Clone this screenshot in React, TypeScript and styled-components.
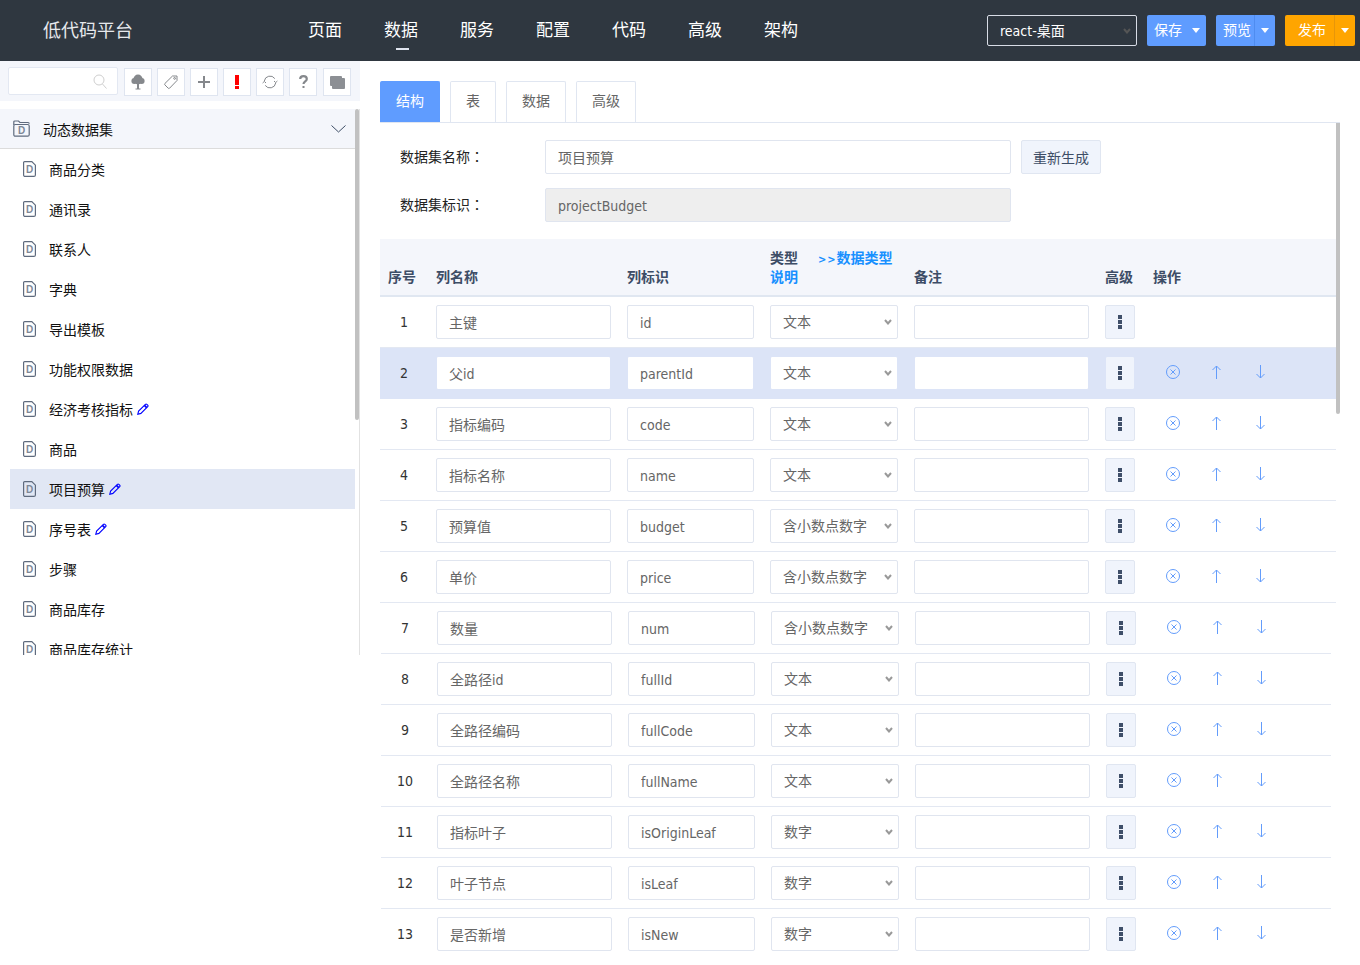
import React from "react";
import styled, { createGlobalStyle } from "styled-components";

const GlobalStyle = createGlobalStyle`
  html, body {
    margin: 0;
    padding: 0;
    overflow: hidden;
    background: #fff;
  }
  body, input, select, button {
    font-family: "DejaVu Sans Condensed", "Noto Sans CJK SC", sans-serif;
    font-size: 14px;
  }
  * {
    box-sizing: border-box;
  }
`;

const Page = styled.div`
  width: 1360px;
  height: 965px;
  overflow: hidden;
  display: flex;
  flex-direction: column;
`;

const Header = styled.header`
  height: 61px;
  flex: none;
  display: flex;
  align-items: center;
  background: #2f3740;
`;

const Brand = styled.div`
  width: 308px;
  padding: 0 0 3px 43px;
  font-size: 18px;
  color: #e6e8ec;
`;

const Nav = styled.nav`
  display: flex;
  gap: 42px;
  padding-bottom: 1px;
`;

const NavItem = styled.a<{ $active?: boolean }>`
  position: relative;
  width: 34px;
  white-space: nowrap;
  font-size: 17px;
  line-height: 24px;
  color: #fff;

  ${({ $active }) =>
    $active &&
    `
    &::after {
      content: "";
      position: absolute;
      left: 12px;
      bottom: -8px;
      width: 13px;
      height: 2px;
      background: #dfe3ee;
    }
  `}
`;

const HeaderActions = styled.div`
  margin-left: auto;
  margin-right: 5px;
  display: flex;
  gap: 10px;
`;

const SelectWrap = styled.div<{ $width?: number }>`
  position: relative;
  width: ${({ $width }) => ($width ? `${$width}px` : "100%")};
`;

const SelectChevron = styled.svg<{ $color: string }>`
  position: absolute;
  top: 50%;
  right: 6px;
  margin-top: -3px;
  pointer-events: none;
  stroke: ${({ $color }) => $color};
`;

const AppSelect = styled.select`
  display: block;
  appearance: none;
  width: 100%;
  height: 31px;
  padding: 0 12px;
  border: 1px solid #d8dce6;
  border-radius: 2px;
  background: #2f3740;
  color: #fff;
  outline: none;
`;

const SplitButton = styled.div<{ $color: string }>`
  height: 31px;
  display: flex;
  border-radius: 2px;
  background: ${({ $color }) => $color};
  color: #fff;
  line-height: 30px;
`;

const SplitLabel = styled.span<{ $pad: number; $width: number; $line: string }>`
  width: ${({ $width }) => $width}px;
  padding-left: ${({ $pad }) => $pad}px;
  border-right: 1px solid ${({ $line }) => $line};
  white-space: nowrap;
`;

const SplitCaret = styled.span`
  flex: 1;
  width: 20px;
  display: flex;
  align-items: center;
  justify-content: center;

  &::before {
    content: "";
    border-style: solid;
    border-width: 5px 4px 0;
    border-color: #fff transparent transparent;
  }
`;

const Body = styled.div`
  flex: 1;
  min-height: 0;
  display: flex;
`;

const Sidebar = styled.aside`
  width: 360px;
  flex: none;
`;

const Toolbar = styled.div`
  height: 40px;
  padding: 6px 8px 0;
  display: flex;
  align-items: flex-start;
  gap: 5px;
  background: #f4f6fb;
`;

const SearchBox = styled.div`
  width: 110px;
  height: 28px;
  margin-right: 1px;
  display: flex;
  align-items: center;
  justify-content: flex-end;
  padding-right: 10px;
  background: #fff;
  border: 1px solid #e3e8f2;
  border-radius: 2px;
`;

const ToolButton = styled.button`
  width: 28px;
  height: 28px;
  margin-top: 1px;
  padding: 0;
  display: flex;
  align-items: center;
  justify-content: center;
  background: #fff;
  border: 1px solid #dfe5f0;

  &:last-child {
    margin-left: 1px;
  }
`;

const TreePanel = styled.div`
  position: relative;
  height: 546px;
  margin-top: 8px;
  overflow: hidden;
  border-right: 1px solid #e2e2e2;
`;

const TreeThumb = styled.div`
  position: absolute;
  top: 0;
  right: 0;
  width: 4px;
  height: 311px;
  background: #c1c1c1;
  border-radius: 2px;
`;

const GroupHead = styled.div`
  height: 40px;
  width: 355px;
  display: flex;
  align-items: center;
  padding: 0 9px 0 13px;
  background: #f4f6fb;
  border-bottom: 1px solid #dcdcdc;
  color: #111;
`;

const GroupTitle = styled.span`
  margin-left: 13px;
  flex: 1;
`;

const TreeItem = styled.div<{ $active?: boolean }>`
  height: 40px;
  width: 345px;
  margin-left: 10px;
  padding-left: 13px;
  display: flex;
  align-items: center;
  color: #111;
  background: ${({ $active }) => ($active ? "#e1e7f4" : "transparent")};
`;

const ItemName = styled.span`
  margin-left: 13px;
  margin-right: 4px;
`;

const Main = styled.main`
  position: relative;
  flex: 1;
  padding: 20px 20px 0;
  min-width: 0;
`;

const MainThumb = styled.div`
  position: absolute;
  top: 62px;
  right: 20px;
  width: 4px;
  height: 291px;
  background: #c1c1c1;
  border-radius: 0 0 2px 2px;
`;

const Tabs = styled.div`
  height: 42px;
  display: flex;
  gap: 10px;
  border-bottom: 1px solid #e0e6f1;
`;

const Tab = styled.div<{ $active?: boolean }>`
  height: 41px;
  padding: 0 15px;
  line-height: 38px;
  border: 1px solid ${({ $active }) => ($active ? "#5f9cff" : "#e0e6f1")};
  border-bottom: none;
  border-radius: 2px 2px 0 0;
  background: ${({ $active }) => ($active ? "#5f9cff" : "#fff")};
  color: ${({ $active }) => ($active ? "#fff" : "#666")};
`;

const Form = styled.div`
  padding: 17px 0 17px 20px;
  display: flex;
  flex-direction: column;
  gap: 14px;
`;

const FormRow = styled.div`
  display: flex;
  align-items: center;
`;

const FormLabel = styled.label`
  width: 145px;
  padding-bottom: 2px;
  color: #222;
`;

const Colon = styled.span`
  font-family: "Noto Sans CJK TC", sans-serif;
`;

const TextInput = styled.input`
  width: 100%;
  height: 34px;
  padding: 0 12px;
  border: 1px solid #e0e5ef;
  border-radius: 2px;
  background: #fff;
  color: #666;
  outline: none;

  &:read-only {
    background: #eee;
  }
`;

const CodeInput = styled(TextInput)`
  padding-top: 2px;
`;

const FormField = styled.div`
  width: 466px;
`;

const GhostButton = styled.button`
  width: 80px;
  height: 34px;
  margin-left: 10px;
  padding: 0;
  background: #f0f4fc;
  border: 1px solid #e0e6f1;
  border-radius: 2px;
  color: #3d4d66;
`;

const Grid = styled.div`
  display: grid;
  grid-template-columns: 40px 175px 127px 128px 175px 30px 1fr;
  column-gap: 16px;
`;

const TableHead = styled(Grid)`
  width: 956px;
  height: 58px;
  padding-bottom: 8px;
  align-items: end;
  background: #f4f6fb;
  border-bottom: 2px solid #e0e7f1;
  color: #3d4d66;
  font-weight: 700;
  line-height: 20px;
`;

const SeqHead = styled.div`
  padding-left: 8px;
  white-space: nowrap;
`;

const OpsHead = styled.div`
  padding-left: 2px;
`;

const TypeHead = styled.div`
  white-space: nowrap;
`;

const TypeLine = styled.div`
  height: 20px;
  display: flex;
  align-items: center;
  padding-top: 1px;
`;

const TypeLink = styled.a`
  margin-left: 20px;
  color: #1890ff;
`;

const TypeArrows = styled.span`
  font-size: 11px;
  letter-spacing: 1px;
  line-height: 1;
`;

const TypeHelp = styled.a`
  display: block;
  color: #1890ff;
`;

const Row = styled(Grid)<{ $active?: boolean; $narrow?: boolean; $last?: boolean }>`
  height: 51px;
  padding: 8px 0;
  align-items: center;
  width: ${({ $narrow }) => ($narrow ? 950 : 956)}px;
  margin-left: ${({ $narrow }) => ($narrow ? 1 : 0)}px;
  background: ${({ $active }) => ($active ? "#dce4f7" : "#fff")};
  border-bottom: 1px solid ${({ $active, $last }) =>
    $last ? "transparent" : $active ? "#dce4f7" : "#e3e8f2"};

  ${({ $active }) =>
    $active &&
    `
    input, select, button {
      border-color: #dce4f7;
    }
  `}
`;

const Seq = styled.div`
  padding-left: 8px;
  text-align: center;
  color: #333;
`;

const TypeSelect = styled.select`
  display: block;
  appearance: none;
  width: 100%;
  height: 34px;
  padding: 0 20px 0 12px;
  border: 1px solid #e0e5ef;
  border-radius: 2px;
  background: #fff;
  color: #666;
  outline: none;
`;

const MoreButton = styled.button`
  width: 30px;
  height: 34px;
  padding: 0;
  display: flex;
  align-items: center;
  justify-content: center;
  background: #f0f4fc;
  border: 1px solid #e0e6f1;
  border-radius: 2px;
`;

const Ops = styled.div`
  padding-left: 15px;
  display: flex;
  align-items: center;
  gap: 30px;
  margin-bottom: 2px;
`;

const Chevron = ({ color }: { color: string }) => (
  <SelectChevron $color={color} width="8" height="6" viewBox="0 0 8 6" fill="none" strokeWidth="2">
    <path d="M1 1l3 3.500L7 1" />
  </SelectChevron>
);

const TreeIcon = () => (
  <svg width="14" height="16" viewBox="0 0 14 16" fill="#85888c">
    <ellipse cx="7" cy="5.500" rx="4.600" ry="5" />
    <circle cx="3.400" cy="7" r="3" />
    <circle cx="10.600" cy="7" r="3" />
    <rect x="6" y="9" width="2" height="6" />
    <rect x="4.500" y="14.500" width="5" height="1" />
  </svg>
);

const TagIcon = () => (
  <svg width="16" height="16" viewBox="0 0 16 16" fill="none" stroke="#85888c" strokeWidth="1">
    <path d="M9.500 2H14V6.500L6.600 14.200a1 1 0 0 1-1.400 0L1.900 10.900a1 1 0 0 1 0-1.400Z" />
    <circle cx="11.600" cy="4.400" r="0.900" />
  </svg>
);

const PlusIcon = () => (
  <svg width="14" height="14" viewBox="0 0 14 14" fill="#85888c">
    <rect x="6" y="1" width="2" height="12" />
    <rect x="1" y="6" width="12" height="2" />
  </svg>
);

const AlertIcon = () => (
  <svg width="6" height="16" viewBox="0 0 6 16" fill="#ff0000">
    <rect x="1" y="1" width="4" height="10" />
    <rect x="1" y="12" width="4" height="3" />
  </svg>
);

const RefreshIcon = () => (
  <svg width="16" height="16" viewBox="0 0 16 16" fill="none" stroke="#85888c" strokeWidth="1">
    <path d="M2.300 7A5.800 5.800 0 0 1 12.800 4.600" />
    <path d="M13.700 9A5.800 5.800 0 0 1 3.200 11.400" />
    <path d="M12 7l1.700 1.600L15.400 7" />
    <path d="M.6 9l1.700-1.600L4 9" />
  </svg>
);

const HelpIcon = () => (
  <svg width="9" height="14" viewBox="0 0 9 14" fill="none" stroke="#85888c" strokeWidth="2.200">
    <path d="M1.200 4C1.200 2 2.700 1.100 4.500 1.100S7.800 2.100 7.800 4c0 2.400-3.300 2.400-3.300 5" />
    <rect x="3.500" y="11" width="2" height="2" fill="#85888c" stroke="none" />
  </svg>
);

const StackIcon = () => (
  <svg width="15" height="13" viewBox="0 0 15 13" fill="#8c8f94">
    <rect x="0" y="0" width="12" height="10" rx="1" />
    <rect x="2" y="2" width="13" height="11" rx="1" />
  </svg>
);

const SearchIcon = () => (
  <svg width="14" height="15" viewBox="0 0 14 15" fill="none" stroke="#cfcfcf" strokeWidth="1">
    <circle cx="6" cy="6" r="5" />
    <path d="M9.500 10L13.500 14.500" />
  </svg>
);

const FolderIcon = () => (
  <svg width="17" height="17" viewBox="0 0 17 17" fill="none" stroke="#5f6b7e" strokeWidth="1.200">
    <path d="M.8 5V2a1 1 0 0 1 1-1h3.700l1.400 1.500H15a1.200 1.200 0 0 1 1.200 1.200" />
    <rect x=".8" y="4.500" width="15.400" height="11.700" rx="1.500" />
    <text x="8.500" y="14" textAnchor="middle" fontSize="10" fontWeight="700" fontFamily="Liberation Sans" fill="#7d8898" stroke="none">
      D
    </text>
  </svg>
);

const FileIcon = () => (
  <svg width="13" height="16" viewBox="0 0 13 16" fill="none" stroke="#5f6b7e" strokeWidth="1.200">
    <path d="M1.600.6H8.800L12.400 4.200V13.900a1.500 1.500 0 0 1-1.500 1.500H2.100A1.500 1.500 0 0 1 .6 13.900V1.600a1 1 0 0 1 1-1Z" />
    <text x="6.500" y="12" textAnchor="middle" fontSize="10" fontWeight="700" fontFamily="Liberation Sans" fill="#7d8898" stroke="none">
      D
    </text>
  </svg>
);

const PencilIcon = () => (
  <svg width="12" height="12" viewBox="0 0 12 12" fill="none" stroke="#0000ff" strokeWidth="1.100">
    <path d="M.8 11.200l.8-3.100L8.400 1.300a1 1 0 0 1 1.400 0l.9.9a1 1 0 0 1 0 1.400L3.900 10.400Z" />
    <path d="M7.400 2.300l2.300 2.300" strokeWidth="1.800" />
  </svg>
);

const GroupChevron = () => (
  <svg width="15" height="8" viewBox="0 0 15 8" fill="none" stroke="#3d4d66" strokeWidth="1">
    <path d="M.5.5l7 6.500 7-6.500" />
  </svg>
);

const MoreIcon = () => (
  <svg width="4" height="14" viewBox="0 0 4 14" fill="#3f4f69">
    <rect width="4" height="4" />
    <rect y="5" width="4" height="4" />
    <rect y="10" width="4" height="4" />
  </svg>
);

const RemoveIcon = () => (
  <svg width="14" height="14" viewBox="0 0 14 14" fill="none" stroke="#639cfb" strokeWidth="1">
    <circle cx="7" cy="7" r="6.500" />
    <path d="M4.500 4.500l5 5M9.500 4.500l-5 5" />
  </svg>
);

const UpIcon = () => (
  <svg width="14" height="14" viewBox="0 0 14 14" fill="none" stroke="#639cfb" strokeWidth="1">
    <path d="M6.500 1v13M2.500 5l4-4 4 4" />
  </svg>
);

const DownIcon = () => (
  <svg width="14" height="14" viewBox="0 0 14 14" fill="none" stroke="#639cfb" strokeWidth="1">
    <path d="M6.500 0v13M2.500 9l4 4 4-4" />
  </svg>
);

const navItems = ["页面", "数据", "服务", "配置", "代码", "高级", "架构"];
const tools = [TreeIcon, TagIcon, PlusIcon, AlertIcon, RefreshIcon, HelpIcon, StackIcon];
const dataTypes = ["文本", "含小数点数字", "数字"];

const datasets = [
  { name: "商品分类" },
  { name: "通讯录" },
  { name: "联系人" },
  { name: "字典" },
  { name: "导出模板" },
  { name: "功能权限数据" },
  { name: "经济考核指标", edited: true },
  { name: "商品" },
  { name: "项目预算", edited: true, active: true },
  { name: "序号表", edited: true },
  { name: "步骤" },
  { name: "商品库存" },
  { name: "商品库存统计" },
];

const columns = [
  { title: "主键", field: "id", type: "文本" },
  { title: "父id", field: "parentId", type: "文本" },
  { title: "指标编码", field: "code", type: "文本" },
  { title: "指标名称", field: "name", type: "文本" },
  { title: "预算值", field: "budget", type: "含小数点数字" },
  { title: "单价", field: "price", type: "含小数点数字" },
  { title: "数量", field: "num", type: "含小数点数字" },
  { title: "全路径id", field: "fullId", type: "文本" },
  { title: "全路径编码", field: "fullCode", type: "文本" },
  { title: "全路径名称", field: "fullName", type: "文本" },
  { title: "指标叶子", field: "isOriginLeaf", type: "数字" },
  { title: "叶子节点", field: "isLeaf", type: "数字" },
  { title: "是否新增", field: "isNew", type: "数字" },
];

export default function App() {
  return (
    <Page>
      <GlobalStyle />
      <Header>
        <Brand>低代码平台</Brand>
        <Nav>
          {navItems.map((item) => (
            <NavItem key={item} $active={item === "数据"}>
              {item}
            </NavItem>
          ))}
        </Nav>
        <HeaderActions>
          <SelectWrap $width={150}>
            <AppSelect defaultValue="react-桌面">
              <option>react-桌面</option>
            </AppSelect>
            <Chevron color="#555" />
          </SelectWrap>
          <SplitButton $color="#5f9cff">
            <SplitLabel $pad={7} $width={39} $line="#5f9cff">保存</SplitLabel>
            <SplitCaret />
          </SplitButton>
          <SplitButton $color="#5f9cff">
            <SplitLabel $pad={7} $width={39} $line="#4f8cf0">预览</SplitLabel>
            <SplitCaret />
          </SplitButton>
          <SplitButton $color="#ffa500">
            <SplitLabel $pad={13} $width={50} $line="#e6960a">发布</SplitLabel>
            <SplitCaret />
          </SplitButton>
        </HeaderActions>
      </Header>
      <Body>
        <Sidebar>
          <Toolbar>
            <SearchBox>
              <SearchIcon />
            </SearchBox>
            {tools.map((Icon, i) => (
              <ToolButton key={i}>
                <Icon />
              </ToolButton>
            ))}
          </Toolbar>
          <TreePanel>
            <GroupHead>
              <FolderIcon />
              <GroupTitle>动态数据集</GroupTitle>
              <GroupChevron />
            </GroupHead>
            {datasets.map((item) => (
              <TreeItem key={item.name} $active={item.active}>
                <FileIcon />
                <ItemName>{item.name}</ItemName>
                {item.edited && <PencilIcon />}
              </TreeItem>
            ))}
            <TreeThumb />
          </TreePanel>
        </Sidebar>
        <Main>
          <Tabs>
            <Tab $active>结构</Tab>
            <Tab>表</Tab>
            <Tab>数据</Tab>
            <Tab>高级</Tab>
          </Tabs>
          <Form>
            <FormRow>
              <FormLabel>数据集名称<Colon>：</Colon></FormLabel>
              <FormField>
                <TextInput defaultValue="项目预算" />
              </FormField>
              <GhostButton>重新生成</GhostButton>
            </FormRow>
            <FormRow>
              <FormLabel>数据集标识<Colon>：</Colon></FormLabel>
              <FormField>
                <CodeInput readOnly value="projectBudget" />
              </FormField>
            </FormRow>
          </Form>
          <TableHead>
            <SeqHead>序号</SeqHead>
            <div>列名称</div>
            <div>列标识</div>
            <TypeHead>
              <TypeLine>
                类型<TypeLink><TypeArrows>&gt;&gt;</TypeArrows>数据类型</TypeLink>
              </TypeLine>
              <TypeHelp>说明</TypeHelp>
            </TypeHead>
            <div>备注</div>
            <div>高级</div>
            <OpsHead>操作</OpsHead>
          </TableHead>
          {columns.map((col, i) => (
            <Row
              key={col.field}
              $active={i === 1}
              $narrow={i >= 6}
              $last={i === columns.length - 1}
            >
              <Seq>{i + 1}</Seq>
              <TextInput defaultValue={col.title} />
              <CodeInput defaultValue={col.field} />
              <SelectWrap>
                <TypeSelect defaultValue={col.type}>
                  {dataTypes.map((t) => (
                    <option key={t}>{t}</option>
                  ))}
                </TypeSelect>
                <Chevron color="#999" />
              </SelectWrap>
              <TextInput />
              <MoreButton>
                <MoreIcon />
              </MoreButton>
              {i > 0 && (
                <Ops>
                  <RemoveIcon />
                  <UpIcon />
                  <DownIcon />
                </Ops>
              )}
            </Row>
          ))}
          <MainThumb />
        </Main>
      </Body>
    </Page>
  );
}
